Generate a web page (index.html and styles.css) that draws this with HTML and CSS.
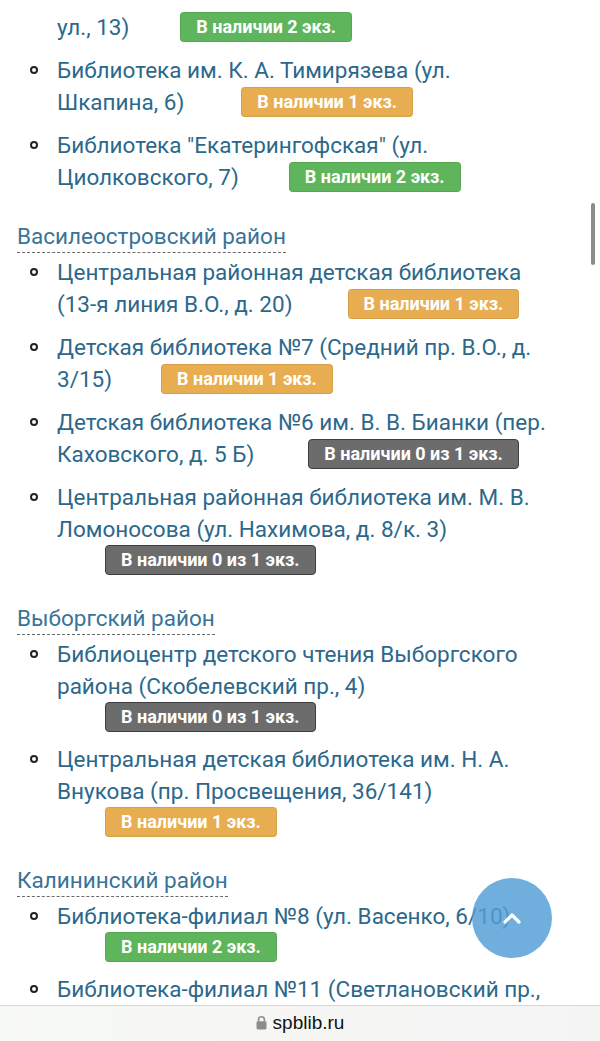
FILE: index.html
```html
<!DOCTYPE html>
<html lang="ru">
<head>
<meta charset="utf-8">
<title>spblib.ru</title>
<link rel="stylesheet" href="styles.css">
</head>
<body>
<div class="content">
  <ul class="list">
    <li class="item cont">
      <div class="body">
        <div class="line row"><span>ул., 13)</span><span class="badge ok g1">В наличии 2 экз.</span></div>
      </div>
    </li>
    <li class="item">
      <div class="body">
        <div class="line">Библиотека им. К. А. Тимирязева (ул.</div>
        <div class="line row"><span>Шкапина, 6)</span><span class="badge warn g2">В наличии 1 экз.</span></div>
      </div>
    </li>
    <li class="item">
      <div class="body">
        <div class="line">Библиотека "Екатерингофская" (ул.</div>
        <div class="line row"><span>Циолковского, 7)</span><span class="badge ok g3">В наличии 2 экз.</span></div>
      </div>
    </li>
  </ul>

  <section class="district">
    <h2 class="heading">Василеостровский район</h2>
    <ul class="list">
      <li class="item">
        <div class="body">
          <div class="line">Центральная районная детская библиотека</div>
          <div class="line row"><span>(13-я линия В.О., д. 20)</span><span class="badge warn g4">В наличии 1 экз.</span></div>
        </div>
      </li>
      <li class="item">
        <div class="body">
          <div class="line">Детская библиотека №7 (Средний пр. В.О., д.</div>
          <div class="line row"><span>3/15)</span><span class="badge warn g5">В наличии 1 экз.</span></div>
        </div>
      </li>
      <li class="item">
        <div class="body">
          <div class="line">Детская библиотека №6 им. В. В. Бианки (пер.</div>
          <div class="line row"><span>Каховского, д. 5 Б)</span><span class="badge none g6">В наличии 0 из 1 экз.</span></div>
        </div>
      </li>
      <li class="item">
        <div class="body">
          <div class="line">Центральная районная библиотека им. М. В.</div>
          <div class="line">Ломоносова (ул. Нахимова, д. 8/к. 3)</div>
          <div class="own"><span class="badge none">В наличии 0 из 1 экз.</span></div>
        </div>
      </li>
    </ul>
  </section>

  <section class="district">
    <h2 class="heading">Выборгский район</h2>
    <ul class="list">
      <li class="item">
        <div class="body">
          <div class="line">Библиоцентр детского чтения Выборгского</div>
          <div class="line">района (Скобелевский пр., 4)</div>
          <div class="own"><span class="badge none">В наличии 0 из 1 экз.</span></div>
        </div>
      </li>
      <li class="item">
        <div class="body">
          <div class="line">Центральная детская библиотека им. Н. А.</div>
          <div class="line">Внукова (пр. Просвещения, 36/141)</div>
          <div class="own"><span class="badge warn">В наличии 1 экз.</span></div>
        </div>
      </li>
    </ul>
  </section>

  <section class="district">
    <h2 class="heading">Калининский район</h2>
    <ul class="list">
      <li class="item">
        <div class="body">
          <div class="line">Библиотека-филиал №8 (ул. Васенко, 6/10)</div>
          <div class="own"><span class="badge ok">В наличии 2 экз.</span></div>
        </div>
      </li>
      <li class="item">
        <div class="body">
          <div class="line">Библиотека-филиал №11 (Светлановский пр.,</div>
        </div>
      </li>
    </ul>
  </section>
</div>

<div class="scrollbar"></div>

<a class="to-top" href="#top" aria-label="Наверх">
  <svg width="22" height="14" viewBox="0 0 22 14"><path d="M4 11 L11 4 L18 11" fill="none" stroke="#fff" stroke-width="3.2" stroke-linecap="round" stroke-linejoin="round"/></svg>
</a>

<div class="urlbar">
  <svg class="lock" width="11" height="15" viewBox="0 0 11 15"><path d="M2.6 6.5 V4.6 A2.9 2.9 0 0 1 8.4 4.6 V6.5" fill="none" stroke="#8c8c8c" stroke-width="1.6"/><rect x="0.5" y="6.3" width="10" height="8.2" rx="1.4" fill="#8c8c8c"/></svg>
  <span class="host">spblib.ru</span>
</div>
</body>
</html>
```

FILE: styles.css
```css
html, body {
  margin: 0;
  padding: 0;
  background: #ffffff;
}

body {
  font-family: Roboto, "Noto Sans", sans-serif;
  font-size: 22.5px;
  line-height: 32px;
  color: #2c688c;
  overflow: hidden;
  height: 1041px;
  position: relative;
}

.content {
  display: flex;
  flex-direction: column;
  padding: 11px 15px 0 17px;
}

.list {
  list-style: none;
  margin: 0;
  padding: 0;
  display: flex;
  flex-direction: column;
  gap: 11px;
  align-self: stretch;
}

.item {
  display: flex;
  align-items: flex-start;
}

.item::before {
  content: "";
  flex: none;
  width: 4px;
  height: 4px;
  border: 2px solid #222;
  border-radius: 50%;
  margin: 12px 19px 0 13px;
}

.item.cont::before {
  border-color: transparent;
}

.body {
  display: flex;
  flex-direction: column;
}

.line {
  height: 32px;
  white-space: nowrap;
}

.row {
  display: flex;
  align-items: center;
}

.own {
  display: flex;
  height: 30px;
  padding-left: 48px;
}

.badge {
  display: inline-block;
  box-sizing: border-box;
  height: 30px;
  line-height: 28px;
  padding: 0 15px;
  border: 1px solid rgba(0, 0, 0, 0.08);
  border-radius: 4px;
  color: #ffffff;
  font-size: 18px;
  font-weight: 700;
  white-space: nowrap;
}

.badge.ok { background: #5fb55c; }
.badge.warn { background: #e9ad51; }
.badge.none { background: #6c6c6c; border-color: #3e3e3e; }

.g1 { margin-left: 51px; }
.g2 { margin-left: 57px; }
.g3 { margin-left: 50px; }
.g4 { margin-left: 55px; }
.g5 { margin-left: 49px; }
.g6 { margin-left: 54px; }

.district {
  display: flex;
  flex-direction: column;
  align-items: flex-start;
  margin-top: 27px;
}

.heading {
  margin: 0 0 3px 0;
  font-size: 22.5px;
  font-weight: 400;
  line-height: 32px;
  color: #3a7398;
  border-bottom: 1px dashed #6a6a6a;
}

.scrollbar {
  position: absolute;
  left: 591px;
  top: 203px;
  width: 4px;
  height: 62px;
  border-radius: 2px;
  background: #8c8c8c;
}

.to-top {
  position: absolute;
  left: 472px;
  top: 878px;
  width: 80px;
  height: 80px;
  border-radius: 50%;
  background: rgba(80, 157, 214, 0.82);
  display: flex;
  align-items: center;
  justify-content: center;
}

.urlbar {
  position: absolute;
  left: 0;
  right: 0;
  bottom: 0;
  height: 35px;
  border-top: 1px solid #d6d6d6;
  background: linear-gradient(90deg, #f7f9f4, #f4f4f4);
  display: flex;
  align-items: center;
  justify-content: center;
  gap: 6px;
}

.lock {
  margin-top: -2px;
}

.host {
  font-family: "Liberation Sans", Arial, sans-serif;
  font-size: 19px;
  line-height: 24px;
  color: #111111;
  margin-top: -2px;
}
```
